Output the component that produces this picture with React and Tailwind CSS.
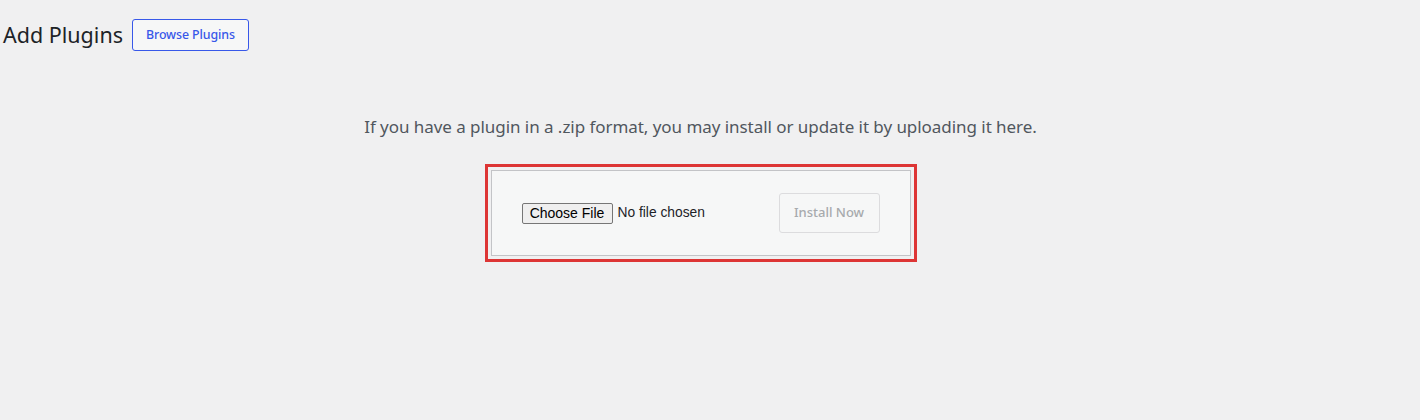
import React from 'react'

const App = () => {
  return (
    <div className="min-h-[420px] w-full bg-[#f0f0f1] text-[#3c434a]" style={{ fontFamily: '"Noto Sans", sans-serif' }}>
      <div className="w-[1401px]">
        {/* Header */}
        <div className="flex items-center pt-[19px] pl-[3px]">
          <h1 className="text-[21.5px] leading-[32px] font-normal text-[#1d2327]">Add Plugins</h1>
          <button className="ml-[9px] h-[32px] px-[13px] border border-[#3858e9] rounded-[3px] bg-[#f6f7f7] text-[#3858e9] text-[12.4px] font-medium leading-[30px] tracking-[-0.1px]">
            Browse Plugins
          </button>
        </div>

        {/* Upload */}
        <div className="flex flex-col items-center mt-[64px]">
          <p className="text-[17px] leading-[24px] text-[#50575e] tracking-[-0.05px]">
            If you have a plugin in a .zip format, you may install or update it by uploading it here.
          </p>
          <div className="mt-[25px] border-[3px] border-[#dd3535] p-[3px]">
            <div className="w-[420px] h-[86px] border border-[#c3c4c7] bg-[#f6f7f7] flex items-center justify-between pl-[30px] pr-[30px]">
              <div className="flex items-center gap-[5px]" style={{ fontFamily: '"Liberation Sans", Arial, sans-serif' }}>
                <span className="inline-flex items-center justify-center w-[91px] h-[21px] border border-[#767676] rounded-[2px] bg-[#efefef] text-[14px] text-black">
                  Choose File
                </span>
                <span className="text-[13.8px] text-[#1d2327]">No file chosen</span>
              </div>
              <button disabled className="w-[101px] h-[40px] border border-[#dcdcde] rounded-[3px] bg-[#f6f7f7] text-[#a7aaad] text-[13px] font-medium">
                Install Now
              </button>
            </div>
          </div>
        </div>
      </div>
    </div>
  )
}

export default App
